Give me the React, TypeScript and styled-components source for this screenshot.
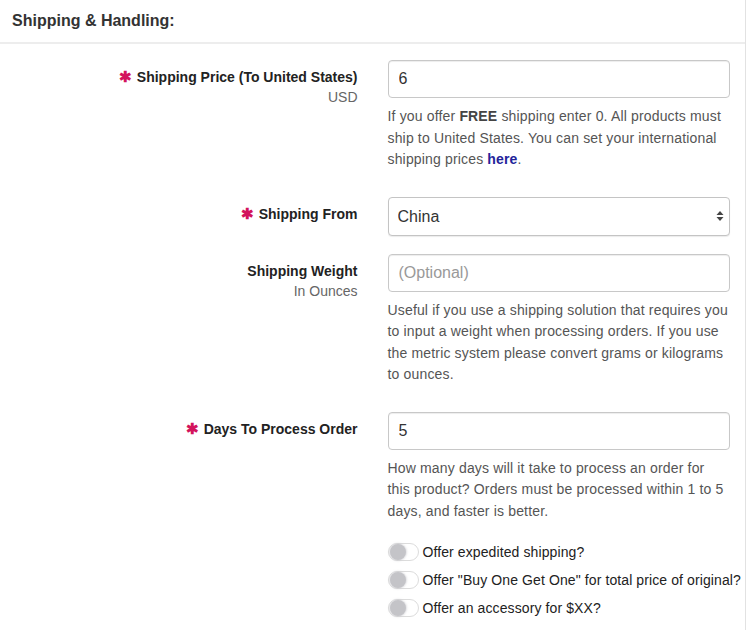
import React from "react";
import styled, { createGlobalStyle } from "styled-components";

const Global = createGlobalStyle`
  html, body { margin: 0; padding: 0; background: #fff; }
  body { font-family: "Liberation Sans", Arial, Helvetica, sans-serif; color: #333; }
  * { box-sizing: border-box; }
`;

const Panel = styled.div`
  width: 746px;
  min-height: 630px;
  border-right: 1px solid #e2e2e2;
  background: #fff;
  overflow: hidden;
`;

const Header = styled.div`
  height: 44px;
  display: flex;
  align-items: center;
  padding: 0 12px;
  border-bottom: 2px solid #ededed;
  font-size: 16px;
  font-weight: 700;
  color: #333;
`;

const Body = styled.div`
  padding-top: 16px;
`;

const Row = styled.div`
  display: grid;
  grid-template-columns: minmax(0, 1fr) minmax(0, 1fr);
  margin-bottom: 18px;
`;

const LabelCol = styled.div`
  padding: 7px 15px 0 15px;
  text-align: right;
  line-height: 20px;
`;

const LabelText = styled.div`
  font-size: 14px;
  font-weight: 700;
  color: #222;
`;

const Req = styled.span`
  color: #d3145c;
  font-weight: 700;
  font-size: 15px;
  margin-right: 5px;
`;

const SubLabel = styled.div`
  font-size: 14px;
  color: #666;
`;

const ControlCol = styled.div`
  padding: 0 15px;
`;

const Input = styled.input`
  display: block;
  width: 100%;
  height: 38px;
  padding: 6px 10px;
  font-family: inherit;
  font-size: 16px;
  color: #333;
  border: 1px solid #c8c8c8;
  border-radius: 4px;
  box-shadow: inset 0 1px 1px rgba(0, 0, 0, 0.075);
  background: #fff;
  outline: none;
  &::placeholder { color: #999; }
`;

const SelectWrap = styled.div`
  position: relative;
`;

const Select = styled.select`
  display: block;
  width: 100%;
  height: 39px;
  padding: 6px 9px;
  font-family: inherit;
  font-size: 16px;
  color: #333;
  border: 1px solid #c4c4c4;
  border-radius: 4px;
  box-shadow: 0 1px 1px rgba(0, 0, 0, 0.08);
  background: #fff;
  appearance: none;
  -webkit-appearance: none;
  outline: none;
`;

const Arrows = styled.svg`
  position: absolute;
  right: 6px;
  top: 50%;
  transform: translateY(-50%);
  pointer-events: none;
`;

const Help = styled.div`
  margin: 8px 0 8px;
  font-size: 14px;
  line-height: 21.5px;
  letter-spacing: 0.16px;
  color: #555;
  b { color: #444; }
`;

const Link = styled.a`
  color: #23239a;
  font-weight: 700;
  text-decoration: none;
`;

const Toggles = styled.div`
  display: flex;
  flex-direction: column;
  margin-top: -10px;
`;

const ToggleRow = styled.label`
  display: flex;
  align-items: center;
  height: 28px;
  gap: 4px;
  font-size: 14px;
  letter-spacing: 0.1px;
  color: #222;
  white-space: nowrap;
`;

const Track = styled.span`
  position: relative;
  width: 31px;
  height: 18px;
  border: 1px solid #dcdcdc;
  border-radius: 9px;
  background: #fff;
  flex: none;
`;

const Knob = styled.span`
  position: absolute;
  left: 1px;
  top: 0px;
  width: 16px;
  height: 16px;
  border-radius: 50%;
  background: #c4c4c8;
  box-shadow: 0 0 2px 1px rgba(200, 200, 205, 0.6);
`;

const Toggle = ({ label }: { label: string }) => (
  <ToggleRow>
    <Track>
      <Knob />
    </Track>
    {label}
  </ToggleRow>
);

export default function App() {
  return (
    <>
      <Global />
      <Panel>
        <Header>Shipping &amp; Handling:</Header>
        <Body>
          <Row>
            <LabelCol>
              <LabelText>
                <Req>✱</Req>Shipping Price (To United States)
              </LabelText>
              <SubLabel>USD</SubLabel>
            </LabelCol>
            <ControlCol>
              <Input defaultValue="6" />
              <Help>
                If you offer <b>FREE</b> shipping enter 0. All products must ship to United States. You can set your
                international shipping prices <Link href="#">here</Link>.
              </Help>
            </ControlCol>
          </Row>
          <Row>
            <LabelCol>
              <LabelText>
                <Req>✱</Req>Shipping From
              </LabelText>
            </LabelCol>
            <ControlCol>
              <SelectWrap>
                <Select defaultValue="China">
                  <option>China</option>
                  <option>United States</option>
                </Select>
                <Arrows width="8" height="12" viewBox="0 0 8 12">
                  <path d="M4 1 L7.5 5 L0.5 5 Z" fill="#444" />
                  <path d="M4 11 L7.5 7 L0.5 7 Z" fill="#444" />
                </Arrows>
              </SelectWrap>
            </ControlCol>
          </Row>
          <Row>
            <LabelCol>
              <LabelText>Shipping Weight</LabelText>
              <SubLabel>In Ounces</SubLabel>
            </LabelCol>
            <ControlCol>
              <Input placeholder="(Optional)" />
              <Help>
                Useful if you use a shipping solution that requires you to input a weight when processing orders. If
                you use the metric system please convert grams or kilograms to ounces.
              </Help>
            </ControlCol>
          </Row>
          <Row>
            <LabelCol>
              <LabelText>
                <Req>✱</Req>Days To Process Order
              </LabelText>
            </LabelCol>
            <ControlCol>
              <Input defaultValue="5" />
              <Help>
                How many days will it take to process an order for this product? Orders must be processed within 1 to 5
                days, and faster is better.
              </Help>
            </ControlCol>
          </Row>
          <Row>
            <div />
            <ControlCol>
              <Toggles>
                <Toggle label="Offer expedited shipping?" />
                <Toggle label={'Offer "Buy One Get One" for total price of original?'} />
                <Toggle label="Offer an accessory for $XX?" />
              </Toggles>
            </ControlCol>
          </Row>
        </Body>
      </Panel>
    </>
  );
}
